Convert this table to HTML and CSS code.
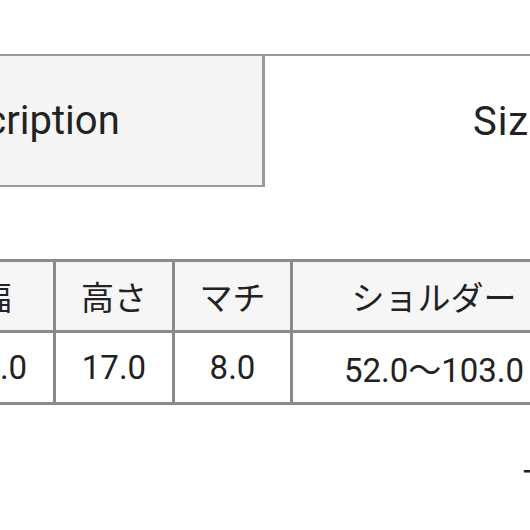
FILE: index.html
```html
<!DOCTYPE html>
<html lang="ja">
<head>
<meta charset="utf-8">
<link rel="stylesheet" href="styles.css">
</head>
<body>
<div class="page">
  <div class="tabs">
    <div class="tab tab-active">Description</div>
    <div class="tab">Size</div>
  </div>
  <table class="size-table">
    <thead>
      <tr><th class="c1">幅</th><th class="c2">高さ</th><th class="c3">マチ</th><th class="c4">ショルダー</th></tr>
    </thead>
    <tbody>
      <tr><td>23.0</td><td>17.0</td><td>8.0</td><td>52.0〜103.0</td></tr>
    </tbody>
  </table>
  <div class="note"><span class="note-text">T</span></div>
</div>
</body>
</html>
```
FILE: styles.css
```css
html, body {
  margin: 0;
  padding: 0;
  background: #fff;
}
body {
  overflow: hidden;
  width: 530px;
  height: 530px;
  font-family: Roboto, "Noto Sans CJK JP", sans-serif;
  color: #222;
}
.page {
  margin-left: -225px;
  padding-top: 54px;
  width: 1300px;
}
.tabs {
  display: flex;
  border-top: 2px solid #9a9a9a;
}
.tab {
  box-sizing: border-box;
  width: 490px;
  height: 131px;
  display: flex;
  align-items: center;
  justify-content: center;
  font-size: 40px;
  font-weight: 400;
}
.tab-active {
  background: #f5f5f5;
  border-right: 3px solid #9a9a9a;
  border-bottom: 2px solid #9a9a9a;
}
.tab + .tab {
  padding-left: 4px;
  letter-spacing: 1px;
}
.size-table {
  margin-top: 72px;
  margin-left: 159px;
  border-collapse: collapse;
  font-family: Roboto, "Noto Sans CJK JP", sans-serif;
  font-size: 33px;
}
.size-table th,
.size-table td {
  border: 3px solid #8a8a8a;
  text-align: center;
  padding: 0;
  font-weight: 400;
}
.size-table th {
  background: #f6f6f6;
  height: 68px;
}
.size-table td {
  height: 69px;
}
.c1, .c2 { width: 116px; }
.c3 { width: 115px; }
.c4 { width: 282px; }
.note {
  margin-left: 748px;
  margin-top: 58px;
  font-size: 33px;
  line-height: 40px;
}
```
